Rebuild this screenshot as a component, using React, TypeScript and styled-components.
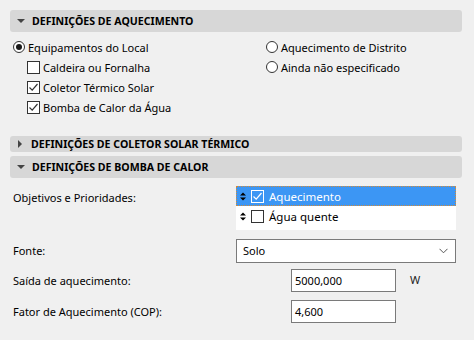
import React from "react";
import styled, { createGlobalStyle } from "styled-components";

const Global = createGlobalStyle`
  html, body { margin: 0; padding: 0; background: #f0f0f0; }
  body { font-family: "Noto Sans", "Liberation Sans", sans-serif; font-size: 11px; color: #000; }
`;

const Page = styled.div`
  width: 474px;
  height: 340px;
  box-sizing: border-box;
  padding: 10px 12px 0 10px;
  display: flex;
  flex-direction: column;
`;

const Header = styled.div<{ $h: number; $mt: number }>`
  height: ${(p) => p.$h}px;
  margin-top: ${(p) => p.$mt}px;
  background: #d7d7d7;
  border-radius: 3px;
  display: flex;
  align-items: center;
  gap: 6px;
  padding-left: 7px;
  font-weight: 700;
  font-size: 10.6px;
  color: #000;
  white-space: nowrap;
  overflow: hidden;
`;

const Tri = styled.span<{ $open: boolean }>`
  width: 0;
  height: 0;
  ${(p) =>
    p.$open
      ? `border-left: 4px solid transparent; border-right: 4px solid transparent; border-top: 4px solid #444; margin-right: 1px;`
      : `border-top: 4px solid transparent; border-bottom: 4px solid transparent; border-left: 4px solid #444; margin: 0 3px 0 1px;`}
`;

const OptionsGrid = styled.div`
  display: grid;
  grid-template-columns: 253px 1fr;
  margin-top: 5px;
  padding-left: 3px;
`;

const Col = styled.div`
  display: flex;
  flex-direction: column;
`;

const Row = styled.label<{ $indent?: number }>`
  height: 20px;
  display: flex;
  align-items: center;
  gap: 3px;
  padding-left: ${(p) => p.$indent ?? 0}px;
  white-space: nowrap;
`;

const Radio = styled.span<{ $on?: boolean }>`
  width: 12px;
  height: 12px;
  box-sizing: border-box;
  border: 1px solid #333;
  border-radius: 50%;
  background: #fff;
  display: flex;
  align-items: center;
  justify-content: center;
  &::after {
    content: "";
    width: 6px;
    height: 6px;
    border-radius: 50%;
    background: ${(p) => (p.$on ? "#1a1a1a" : "transparent")};
  }
`;

const Box = styled.span<{ $light?: boolean }>`
  width: 13px;
  height: 13px;
  box-sizing: border-box;
  border: 1px solid ${(p) => (p.$light ? "#fff" : "#333")};
  background: ${(p) => (p.$light ? "transparent" : "#fff")};
  display: flex;
  align-items: center;
  justify-content: center;
`;

const Check = ({ color = "#333" }: { color?: string }) => (
  <svg width="11" height="11" viewBox="0 0 11 11">
    <path d="M1.5 5.5 L4.2 8.2 L9.5 2" fill="none" stroke={color} strokeWidth="1.2" />
  </svg>
);

const Checkbox = ({ on, light }: { on?: boolean; light?: boolean }) => (
  <Box $light={light}>{on && <Check color={light ? "#fff" : "#333"} />}</Box>
);

const FieldRow = styled.div<{ $mt: number; $h: number }>`
  display: flex;
  align-items: center;
  margin-top: ${(p) => p.$mt}px;
  height: ${(p) => p.$h}px;
`;

const Label = styled.div<{ $w: number; $top?: boolean }>`
  width: ${(p) => p.$w}px;
  box-sizing: border-box;
  padding-left: 3px;
  flex-shrink: 0;
  ${(p) => (p.$top ? "align-self: flex-start; margin-top: 4px;" : "")}
`;

const ListBox = styled.div`
  width: 220px;
  height: 44px;
  background: #fff;
  display: flex;
  flex-direction: column;
  align-self: flex-start;
`;

const ListItem = styled.div<{ $sel?: boolean }>`
  height: 20px;
  box-sizing: border-box;
  display: flex;
  align-items: center;
  gap: 5px;
  padding-left: 3px;
  font-size: 11.5px;
  background: ${(p) => (p.$sel ? "#3c96f4" : "#fff")};
  color: ${(p) => (p.$sel ? "#fff" : "#000")};
  border: 1px dotted ${(p) => (p.$sel ? "#d08a3a" : "transparent")};
`;

const Updown = ({ color }: { color: string }) => (
  <svg width="6" height="9" viewBox="0 0 6 9">
    <path d="M0 3.5 L3 0.5 L6 3.5 Z M0 5.5 L3 8.5 L6 5.5 Z" fill={color} />
  </svg>
);

const Select = styled.div`
  width: 220px;
  height: 24px;
  box-sizing: border-box;
  border: 1px solid #7a7a7a;
  background: #fff;
  display: flex;
  align-items: center;
  justify-content: space-between;
  padding: 0 7px 0 6px;
`;

const Input = styled.div`
  width: 105px;
  height: 23px;
  box-sizing: border-box;
  border: 1px solid #7a7a7a;
  background: #fff;
  display: flex;
  align-items: center;
  padding-left: 3px;
`;

const Unit = styled.span`
  margin-left: 14px;
  margin-top: -2px;
  color: #222;
`;

export default function App() {
  return (
    <>
      <Global />
      <Page>
        <Header $h={22} $mt={0}>
          <Tri $open />
          DEFINIÇÕES DE AQUECIMENTO
        </Header>
        <OptionsGrid>
          <Col>
            <Row>
              <Radio $on />
              Equipamentos do Local
            </Row>
            <Row $indent={14}>
              <Checkbox />
              Caldeira ou Fornalha
            </Row>
            <Row $indent={14}>
              <Checkbox on />
              Coletor Térmico Solar
            </Row>
            <Row $indent={14}>
              <Checkbox on />
              Bomba de Calor da Água
            </Row>
          </Col>
          <Col>
            <Row>
              <Radio />
              Aquecimento de Distrito
            </Row>
            <Row>
              <Radio />
              Ainda não especificado
            </Row>
          </Col>
        </OptionsGrid>
        <Header $h={16} $mt={19}>
          <Tri $open={false} />
          DEFINIÇÕES DE COLETOR SOLAR TÉRMICO
        </Header>
        <Header $h={22} $mt={4}>
          <Tri $open />
          DEFINIÇÕES DE BOMBA DE CALOR
        </Header>
        <FieldRow $mt={8} $h={44}>
          <Label $w={226} $top>
            Objetivos e Prioridades:
          </Label>
          <ListBox>
            <ListItem $sel>
              <Updown color="#000" />
              <Checkbox on light />
              Aquecimento
            </ListItem>
            <ListItem>
              <Updown color="#000" />
              <Checkbox />
              Água quente
            </ListItem>
          </ListBox>
        </FieldRow>
        <FieldRow $mt={9} $h={23}>
          <Label $w={226}>Fonte:</Label>
          <Select>
            Solo
            <svg width="9" height="6" viewBox="0 0 9 6">
              <path d="M0.5 0.8 L4.5 4.8 L8.5 0.8" fill="none" stroke="#555" strokeWidth="1" />
            </svg>
          </Select>
        </FieldRow>
        <FieldRow $mt={7} $h={23}>
          <Label $w={281}>Saída de aquecimento:</Label>
          <Input>5000,000</Input>
          <Unit>W</Unit>
        </FieldRow>
        <FieldRow $mt={8} $h={23}>
          <Label $w={281}>Fator de Aquecimento (COP):</Label>
          <Input>4,600</Input>
        </FieldRow>
      </Page>
    </>
  );
}
